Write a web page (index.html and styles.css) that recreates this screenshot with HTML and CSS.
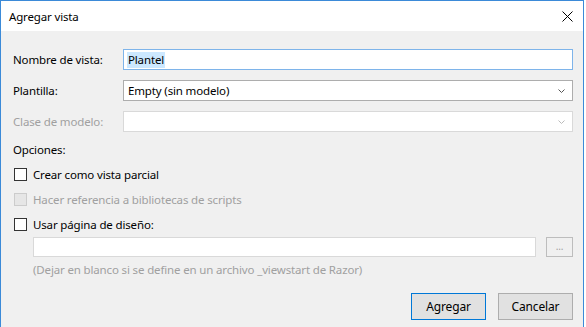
FILE: index.html
```html
<!DOCTYPE html>
<html lang="es">
<head>
    <meta charset="UTF-8">
    <title>Agregar vista</title>
    <link rel="stylesheet" href="styles.css">
</head>
<body>
    <div class="window">
        <div class="titlebar">
            <span class="title">Agregar vista</span>
            <svg class="close" width="11" height="11" viewBox="0 0 11 11">
                <path d="M0.5 0.5 L10.5 10.5 M10.5 0.5 L0.5 10.5" stroke="#000" stroke-width="1" fill="none"/>
            </svg>
        </div>

        <div class="content">
            <div class="form-grid">
                <label class="label">Nombre de vista:</label>
                <div class="field focused"><span class="selected">Plantel</span></div>

                <label class="label">Plantilla:</label>
                <div class="field combo">
                    <span>Empty (sin modelo)</span>
                    <svg class="chevron" width="7" height="4" viewBox="0 0 7 4"><path d="M0.5 0.5 L3.5 3.5 L6.5 0.5" stroke="#555" fill="none"/></svg>
                </div>

                <label class="label disabled">Clase de modelo:</label>
                <div class="field combo off">
                    <span></span>
                    <svg class="chevron" width="7" height="4" viewBox="0 0 7 4"><path d="M0.5 0.5 L3.5 3.5 L6.5 0.5" stroke="#bbb" fill="none"/></svg>
                </div>
            </div>

            <div class="section">Opciones:</div>

            <div class="checks">
                <div class="check-row"><span class="box"></span>Crear como vista parcial</div>
                <div class="check-row disabled"><span class="box off"></span>Hacer referencia a bibliotecas de scripts</div>
                <div class="check-row"><span class="box"></span>Usar página de diseño:</div>
            </div>

            <div class="layout-row">
                <div class="field off wide"></div>
                <div class="browse">...</div>
            </div>
            <div class="hint">(Dejar en blanco si se define en un archivo _viewstart de Razor)</div>

            <div class="buttons">
                <button class="btn default">Agregar</button>
                <button class="btn">Cancelar</button>
            </div>
        </div>
    </div>
</body>
</html>
```

FILE: styles.css
```css
* {
    margin: 0;
    padding: 0;
    box-sizing: border-box;
}

body {
    font-family: "Noto Sans", "Open Sans", sans-serif;
    font-size: 11.5px;
    letter-spacing: -0.15px;
    color: #000;
    background: #fff;
    width: 586px;
    height: 327px;
    overflow: hidden;
}

.window {
    width: 584px;
    height: 328px;
    border: 1px solid #3b8ad8;
    border-bottom: none;
    background: #f0f0f0;
}

.titlebar {
    height: 30px;
    background: #fff;
    display: flex;
    align-items: center;
    justify-content: space-between;
    padding: 0 10px 0 8px;
}

.close {
    display: block;
}

.content {
    padding: 18px 10px 0 12px;
}

.form-grid {
    display: grid;
    grid-template-columns: 110px 1fr;
    row-gap: 10px;
    align-items: center;
}

.label {
    line-height: 16px;
}

.label.disabled,
.check-row.disabled,
.hint {
    color: #a0a0a0;
}

.field {
    height: 21px;
    background: #fff;
    border: 1px solid #adadad;
    display: flex;
    align-items: center;
    padding: 0 4px;
}

.field.focused {
    border-color: #7eb4ea;
    padding-left: 3px;
}

.selected {
    background: #cce8ff;
    padding: 0 1px;
    line-height: 16px;
}

.combo {
    justify-content: space-between;
    padding-right: 7px;
}

.field.off {
    border-color: #d9d9d9;
}

.chevron {
    display: block;
}

.section {
    margin-top: 10px;
    line-height: 16px;
}

.checks {
    margin-top: 4px;
}

.check-row {
    height: 25px;
    display: flex;
    align-items: center;
    gap: 6px;
    padding-left: 1px;
}

.box {
    width: 13px;
    height: 13px;
    border: 1px solid #333;
    background: #fff;
}

.box.off {
    border-color: #cccccc;
    background: #e6e6e6;
}

.layout-row {
    display: flex;
    gap: 10px;
    padding-left: 20px;
}

.field.wide {
    flex: 1;
    height: 20px;
}

.browse {
    width: 27px;
    height: 20px;
    border: 1px solid #bdbdbd;
    background: #f0f0f0;
    color: #a0a0a0;
    font-size: 10px;
    text-align: center;
    line-height: 16px;
}

.hint {
    margin-top: 5px;
    padding-left: 20px;
    line-height: 16px;
}

.buttons {
    display: flex;
    justify-content: flex-end;
    gap: 12px;
    margin-top: 15px;
}

.btn {
    width: 75px;
    height: 27px;
    font-family: inherit;
    font-size: 12px;
    letter-spacing: -0.15px;
    background: #e1e1e1;
    border: 1px solid #adadad;
    color: #000;
}

.btn.default {
    border-color: #0078d7;
}
```
